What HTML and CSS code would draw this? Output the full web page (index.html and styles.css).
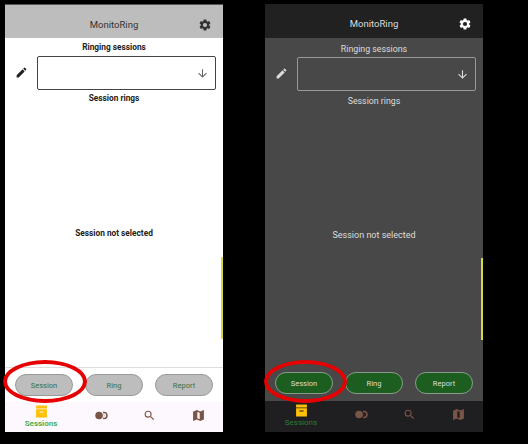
FILE: index.html
```html
<!DOCTYPE html>
<html lang="en">
<head>
  <meta charset="UTF-8">
  <meta name="viewport" content="width=device-width, initial-scale=1.0">
  <title>MonitoRing</title>
  <link rel="stylesheet" href="styles.css">
</head>
<body>
  <svg class="icon-defs" width="0" height="0">
    <symbol id="i-gear" viewBox="0 0 24 24"><path d="M19.14 12.94c.04-.3.06-.61.06-.94 0-.32-.02-.64-.07-.94l2.03-1.58a.49.49 0 0 0 .12-.61l-1.92-3.32a.49.49 0 0 0-.59-.22l-2.39.96c-.5-.38-1.03-.7-1.62-.94l-.36-2.54a.48.48 0 0 0-.48-.41h-3.84a.48.48 0 0 0-.47.41l-.36 2.54c-.59.24-1.13.57-1.62.94l-2.39-.96a.49.49 0 0 0-.59.22L2.74 8.87a.48.48 0 0 0 .12.61l2.03 1.58c-.05.3-.09.63-.09.94s.02.64.07.94l-2.03 1.58a.49.49 0 0 0-.12.61l1.92 3.32c.12.22.37.29.59.22l2.39-.96c.5.38 1.03.7 1.62.94l.36 2.54c.05.24.24.41.48.41h3.84c.24 0 .44-.17.47-.41l.36-2.54c.59-.24 1.13-.56 1.62-.94l2.39.96c.22.08.47 0 .59-.22l1.92-3.32a.48.48 0 0 0-.12-.61l-2.01-1.58zM12 15.6A3.6 3.6 0 1 1 12 8.4a3.6 3.6 0 0 1 0 7.2z"/></symbol>
    <symbol id="i-pencil" viewBox="0 0 24 24"><path d="M3 17.25V21h3.75L17.81 9.94l-3.75-3.75L3 17.25zM20.71 7.04a1 1 0 0 0 0-1.41l-2.34-2.34a1 1 0 0 0-1.41 0l-1.83 1.83 3.75 3.75 1.83-1.83z"/></symbol>
    <symbol id="i-arrow" viewBox="0 0 24 24"><path d="M20 12l-1.41-1.41L13 16.17V4h-2v12.17l-5.58-5.59L4 12l8 8 8-8z"/></symbol>
    <symbol id="i-archive" viewBox="0 0 24 24"><path d="M2 1h20v5.5H2z"/><path fill-rule="evenodd" d="M2 8h20v15H2zM8 12v2h8v-2z"/></symbol>
    <symbol id="i-rings" viewBox="0 0 24 24"><circle cx="7.5" cy="12" r="7"/><path fill-rule="evenodd" d="M16.5 5a7 7 0 1 1 0 14 7 7 0 0 1-2.4-.4 8.6 8.6 0 0 0 0-13.2 7 7 0 0 1 2.4-.8zm0 3a4 4 0 0 0-.8.1 9.8 9.8 0 0 1 0 7.8 4 4 0 1 0 .8-7.9z"/></symbol>
    <symbol id="i-search" viewBox="0 0 24 24"><path d="M15.5 14h-.79l-.28-.27A6.47 6.47 0 0 0 16 9.5 6.5 6.5 0 1 0 9.5 16c1.61 0 3.09-.59 4.23-1.57l.27.28v.79l5 4.99L20.49 19l-4.99-5zm-6 0A4.5 4.5 0 1 1 9.5 5a4.5 4.5 0 0 1 0 9z"/></symbol>
    <symbol id="i-map" viewBox="0 0 24 24"><path fill-rule="evenodd" d="M2 5L9 2l6 2.5L22 2v17.5L15 22l-6-2.5L2 22zM9.8 5.5v11.7l4.4 1.6V7z"/></symbol>
  </svg>

  <div class="screen light">
    <header class="app-bar">
      <span class="app-title">MonitoRing</span>
      <svg class="gear"><use href="#i-gear"/></svg>
    </header>
    <main class="content">
      <div class="section-label">Ringing sessions</div>
      <div class="session-row">
        <svg class="pencil"><use href="#i-pencil"/></svg>
        <div class="select-box"><svg class="arrow"><use href="#i-arrow"/></svg></div>
      </div>
      <div class="section-label rings-label">Session rings</div>
      <div class="empty-text">Session not selected</div>
      <div class="scroll-mark"></div>
    </main>
    <div class="actions">
      <button class="pill">Session</button>
      <button class="pill">Ring</button>
      <button class="pill">Report</button>
    </div>
    <nav class="bottom-nav">
      <div class="nav-item active"><svg class="nav-icon"><use href="#i-archive"/></svg><span class="nav-label">Sessions</span></div>
      <div class="nav-item"><svg class="nav-icon"><use href="#i-rings"/></svg></div>
      <div class="nav-item"><svg class="nav-icon"><use href="#i-search"/></svg></div>
      <div class="nav-item"><svg class="nav-icon"><use href="#i-map"/></svg></div>
    </nav>
    <div class="highlight"></div>
  </div>

  <div class="screen dark">
    <header class="app-bar">
      <span class="app-title">MonitoRing</span>
      <svg class="gear"><use href="#i-gear"/></svg>
    </header>
    <main class="content">
      <div class="section-label">Ringing sessions</div>
      <div class="session-row">
        <svg class="pencil"><use href="#i-pencil"/></svg>
        <div class="select-box"><svg class="arrow"><use href="#i-arrow"/></svg></div>
      </div>
      <div class="section-label rings-label">Session rings</div>
      <div class="empty-text">Session not selected</div>
      <div class="scroll-mark"></div>
    </main>
    <div class="actions">
      <button class="pill">Session</button>
      <button class="pill">Ring</button>
      <button class="pill">Report</button>
    </div>
    <nav class="bottom-nav">
      <div class="nav-item active"><svg class="nav-icon"><use href="#i-archive"/></svg><span class="nav-label">Sessions</span></div>
      <div class="nav-item"><svg class="nav-icon"><use href="#i-rings"/></svg></div>
      <div class="nav-item"><svg class="nav-icon"><use href="#i-search"/></svg></div>
      <div class="nav-item"><svg class="nav-icon"><use href="#i-map"/></svg></div>
    </nav>
    <div class="highlight"></div>
  </div>
</body>
</html>
```

FILE: styles.css
```css
html, body {
  height: 100%;
}

body {
  margin: 0;
  padding: 4px 0 0 5px;
  box-sizing: border-box;
  display: flex;
  gap: 42px;
  overflow: hidden;
  background-color: #000;
  font-family: Roboto, "Liberation Sans", sans-serif;
}

.icon-defs {
  position: absolute;
}

.screen {
  position: relative;
  width: 218px;
  height: 428px;
  display: flex;
  flex-direction: column;
}

.app-bar {
  position: relative;
  height: 34px;
  flex: none;
  box-sizing: border-box;
  padding-top: 5px;
  display: flex;
  align-items: center;
  justify-content: center;
  font-size: 9.5px;
}

.gear {
  position: absolute;
  left: 193px;
  top: 13px;
  width: 14px;
  height: 14px;
  fill: currentColor;
}

.content {
  position: relative;
  flex: 1;
  display: flex;
  flex-direction: column;
  align-items: center;
}

.section-label {
  font-size: 8.3px;
  line-height: 12px;
  margin-top: 3px;
}

.session-row {
  align-self: stretch;
  display: flex;
  align-items: center;
  margin-top: 3px;
  padding: 0 7px 0 10px;
}

.pencil {
  width: 13px;
  height: 13px;
  margin-right: 9px;
  fill: currentColor;
  position: relative;
  top: -1px;
}

.select-box {
  flex: 1;
  height: 32px;
  display: flex;
  align-items: center;
  justify-content: flex-end;
  padding-right: 6px;
  border-radius: 2px;
  border: 1px solid;
}

.arrow {
  width: 13px;
  height: 13px;
  fill: currentColor;
}

.rings-label {
  margin-top: 2px;
}

.empty-text {
  font-size: 8.3px;
  line-height: 12px;
  margin-top: 123px;
}

.scroll-mark {
  position: absolute;
  right: 0;
  top: 219px;
  width: 2px;
  height: 82px;
  background-color: #d8d83a;
}

.actions {
  flex: none;
  display: flex;
  justify-content: space-between;
  padding: 6px 10px 6px;
}

.pill {
  width: 58px;
  height: 22px;
  padding: 0;
  border-radius: 11px;
  border: 1px solid;
  font-family: inherit;
  font-size: 7.5px;
}

.bottom-nav {
  flex: none;
  height: 30px;
  display: grid;
  grid-template-columns: 72px 48px 48px 50px;
}

.nav-item {
  display: flex;
  flex-direction: column;
  align-items: center;
  padding-top: 3px;
}

.nav-item + .nav-item {
  padding-top: 7px;
}

.nav-icon {
  width: 13px;
  height: 13px;
  fill: #795548;
}

.active .nav-icon {
  fill: #ffc107;
}

.nav-label {
  font-size: 8px;
  line-height: 10px;
  margin-top: 1px;
}

.highlight {
  position: absolute;
  left: -2px;
  top: 356px;
  box-sizing: border-box;
  width: 84px;
  height: 43px;
  border: 4px solid #e60000;
  border-radius: 50%;
}

/* colours for each theme */
.light {
  color: #222;
  background-color: #fff;
}

.light .app-bar {
  background-color: #bdbdbd;
  border-top: 1px solid #555;
  color: #333;
}

.light .section-label,
.light .empty-text {
  font-weight: 700;
}

.light .select-box {
  border-color: #444;
}

.light .arrow {
  color: #666;
}

.light .actions {
  border-top: 1px solid #ddd;
}

.light .pill {
  background-color: #bdbdbd;
  border-color: #999;
  color: #3b7040;
}

.light .bottom-nav {
  background-color: #fdf8fd;
}

.light .nav-label {
  color: #4caf50;
  font-weight: 700;
}

.dark {
  color: #ddd;
  background-color: #484848;
}

.dark .app-bar {
  background-color: #212121;
  color: #ddd;
}

.dark .gear {
  color: #fff;
}

.dark .content {
  top: 1px;
}

.dark .section-label {
  font-size: 8.8px;
  margin-top: 4px;
}

.dark .session-row {
  margin-top: 2px;
}

.dark .rings-label {
  margin-top: 4px;
}

.dark .empty-text {
  font-size: 9px;
  margin-top: 122px;
}

.dark .select-box {
  border-color: #999;
}

.dark .pill {
  background-color: #1b5e20;
  border-color: #8a9a8a;
  color: #ddd;
}

.dark .actions {
  padding-top: 5px;
  padding-bottom: 7px;
}

.dark .bottom-nav {
  background-color: #1f1f22;
  height: 31px;
}

.dark .nav-label {
  color: #2e7d32;
  font-weight: 400;
}

.dark .highlight {
  left: -1px;
  width: 83px;
}
```
